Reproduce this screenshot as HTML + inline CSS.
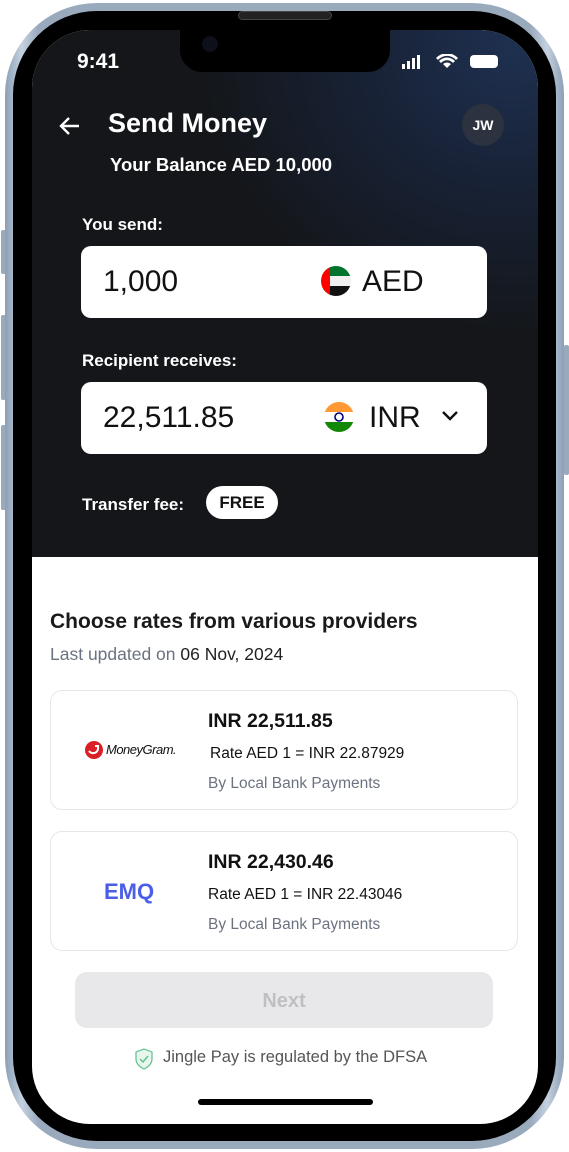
<!DOCTYPE html>
<html><head><meta charset="utf-8"><style>
*{margin:0;padding:0;box-sizing:border-box}
body{width:569px;height:1152px;background:#fff;position:relative;overflow:hidden;font-family:"Liberation Sans",sans-serif}
.frame{position:absolute;left:5px;top:3px;width:559px;height:1146px;border-radius:92px;background:linear-gradient(90deg,#8c9fb5,#c3d1e0 3%,#9aaabd 6%,#9aaabd 94%,#c3d1e0 97%,#8c9fb5);}
.black{position:absolute;left:13px;top:11px;width:543px;height:1130px;border-radius:84px;background:#000}
.screen{position:absolute;left:32px;top:30px;width:506px;height:1094px;border-radius:58px;background:#fff;overflow:hidden}
.dark{position:absolute;left:0;top:0;width:506px;height:527px;background:radial-gradient(ellipse 420px 380px at 480px 20px,#1e3050 0%,#182236 35%,#141619 75%)}
.notch{position:absolute;left:148px;top:0;width:210px;height:42px;background:#000;border-radius:0 0 22px 22px}
.btn{position:absolute;left:1px;width:5px;background:#9aaabd;border-radius:2px}
.t{position:absolute;color:#fff;white-space:nowrap}
.box{position:absolute;left:49px;width:406px;height:72px;background:#fff;border-radius:10px}
.card{position:absolute;left:18px;width:468px;height:120px;border:1px solid #e6e7ea;border-radius:12px;background:#fff}
.d{position:absolute;white-space:nowrap;color:#111}
</style></head><body>
<div class="btn" style="top:230px;height:44px"></div>
<div class="btn" style="top:315px;height:85px"></div>
<div class="btn" style="top:425px;height:85px"></div>
<div class="btn" style="left:564px;top:345px;height:130px"></div>
<div class="frame"></div>
<div class="black"></div>
<div style="position:absolute;left:238px;top:11px;width:94px;height:9px;border-radius:5px;background:#222;border:1px solid #444"></div>
<div class="screen">
 <div class="dark"></div>
 <div class="notch"></div>
 <div style="position:absolute;left:170px;top:6px;width:16px;height:16px;border-radius:50%;background:#0d0f1a"></div>
 <div class="t" style="left:45px;top:20px;font-size:21px;font-weight:bold">9:41</div>
 <svg style="position:absolute;left:370px;top:24px" width="100" height="16" viewBox="0 0 100 16">
  <rect x="0" y="10" width="3" height="5" fill="#fff"/><rect x="5" y="7" width="3" height="8" fill="#fff"/><rect x="10" y="4" width="3" height="11" fill="#fff"/><rect x="15" y="1" width="3" height="14" fill="#fff"/>
  <path d="M45 14 L41 10 A6 6 0 0 1 49 10Z M37 7 A11 11 0 0 1 53 7 L51 9 A8 8 0 0 0 39 9Z M34 4 A15 15 0 0 1 56 4 L54 6 A12 12 0 0 0 36 6Z" fill="#fff"/>
  <rect x="68" y="1" width="28" height="13" rx="4" fill="#fff"/>
 </svg>
 <svg style="position:absolute;left:26px;top:84px" width="24" height="24" viewBox="0 0 24 24"><path d="M21 12H4M11 4L3 12L11 20" stroke="#fff" stroke-width="2.4" fill="none"/></svg>
 <div class="t" style="left:76px;top:78px;font-size:27px;font-weight:bold">Send Money</div>
 <div style="position:absolute;left:430px;top:74px;width:42px;height:42px;border-radius:50%;background:#2c3240;color:#fff;font-size:14px;font-weight:bold;text-align:center;line-height:42px">JW</div>
 <div class="t" style="left:78px;top:124px;font-size:18.5px;font-weight:bold">Your Balance AED 10,000</div>
 <div class="t" style="left:50px;top:185px;font-size:17px;font-weight:bold">You send:</div>
 <div class="box" style="top:216px">
  <div class="d" style="left:22px;top:19px;font-size:30px">1,000</div>
  <svg style="position:absolute;left:240px;top:20px" width="30" height="30" viewBox="0 0 30 30"><defs><clipPath id="c1"><circle cx="15" cy="15" r="15"/></clipPath></defs><g clip-path="url(#c1)"><rect width="30" height="10" fill="#00732f"/><rect y="10" width="30" height="10" fill="#f0f0f0"/><rect y="20" width="30" height="10" fill="#111"/><rect width="9" height="30" fill="#f00"/></g></svg>
  <div class="d" style="left:281px;top:19px;font-size:30px">AED</div>
 </div>
 <div class="t" style="left:50px;top:321px;font-size:17px;font-weight:bold">Recipient receives:</div>
 <div class="box" style="top:352px">
  <div class="d" style="left:22px;top:19px;font-size:30px">22,511.85</div>
  <svg style="position:absolute;left:243px;top:20px" width="30" height="30" viewBox="0 0 30 30"><defs><clipPath id="c2"><circle cx="15" cy="15" r="15"/></clipPath></defs><g clip-path="url(#c2)"><rect width="30" height="10" fill="#ff9933"/><rect y="10" width="30" height="10" fill="#fff"/><rect y="20" width="30" height="10" fill="#138808"/></g><circle cx="15" cy="15" r="4" fill="none" stroke="#000080" stroke-width="1.6"/></svg>
  <div class="d" style="left:288px;top:19px;font-size:30px">INR</div>
  <svg style="position:absolute;left:360px;top:28px" width="18" height="12" viewBox="0 0 18 12"><path d="M2 2L9 9L16 2" stroke="#111" stroke-width="2.4" fill="none"/></svg>
 </div>
 <div class="t" style="left:50px;top:465px;font-size:17px;font-weight:bold">Transfer fee:</div>
 <div style="position:absolute;left:174px;top:456px;width:72px;height:33px;border-radius:17px;background:#fff;color:#111;font-size:17px;font-weight:bold;text-align:center;line-height:33px">FREE</div>
 <div class="d" style="left:18px;top:580px;font-size:21px;font-weight:bold;color:#1a1a1a">Choose rates from various providers</div>
 <div class="d" style="left:18px;top:614px;font-size:17.5px;color:#6b7280">Last updated on <span style="color:#222">06 Nov, 2024</span></div>
 <div class="card" style="top:660px">
  <svg style="position:absolute;left:34px;top:50px" width="18" height="18" viewBox="0 0 18 18"><circle cx="9" cy="9" r="9" fill="#da1f26"/><path d="M4 10 A5 5 0 0 0 13 8 M10 5 L13 5 L13 8" stroke="#fff" stroke-width="2" fill="none"/></svg>
  <div class="d" style="left:55px;top:51px;font-size:13px;font-style:italic;letter-spacing:-0.5px">MoneyGram.</div>
  <div class="d" style="left:157px;top:19px;font-size:19.5px;font-weight:bold">INR 22,511.85</div>
  <div class="d" style="left:159px;top:54px;font-size:15.5px">Rate AED 1 = INR 22.87929</div>
  <div class="d" style="left:157px;top:84px;font-size:15.5px;color:#6b7280">By Local Bank Payments</div>
 </div>
 <div class="card" style="top:801px">
  <div class="d" style="left:53px;top:47px;font-size:22px;font-weight:bold;color:#4a5ee8">EMQ</div>
  <div class="d" style="left:157px;top:19px;font-size:19.5px;font-weight:bold">INR 22,430.46</div>
  <div class="d" style="left:157px;top:54px;font-size:15.5px">Rate AED 1 = INR 22.43046</div>
  <div class="d" style="left:157px;top:84px;font-size:15.5px;color:#6b7280">By Local Bank Payments</div>
 </div>
 <div style="position:absolute;left:43px;top:942px;width:418px;height:56px;border-radius:12px;background:#e8e8ea;color:#c0c0c4;font-size:20px;font-weight:bold;text-align:center;line-height:58px">Next</div>
 <svg style="position:absolute;left:103px;top:1018px" width="18" height="22" viewBox="0 0 18 22"><path d="M9 1L17 4V11C17 16 13 19 9 21C5 19 1 16 1 11V4Z" fill="#e8f7ee" stroke="#5cc08a" stroke-width="1.2"/><path d="M5 11L8 14L13 8" stroke="#5cc08a" stroke-width="1.4" fill="none"/></svg>
 <div class="d" style="left:131px;top:1018px;font-size:16.5px;color:#555">Jingle Pay is regulated by the DFSA</div>
 <div style="position:absolute;left:166px;top:1069px;width:175px;height:6px;border-radius:3px;background:#000"></div>
</div>
</body></html>
